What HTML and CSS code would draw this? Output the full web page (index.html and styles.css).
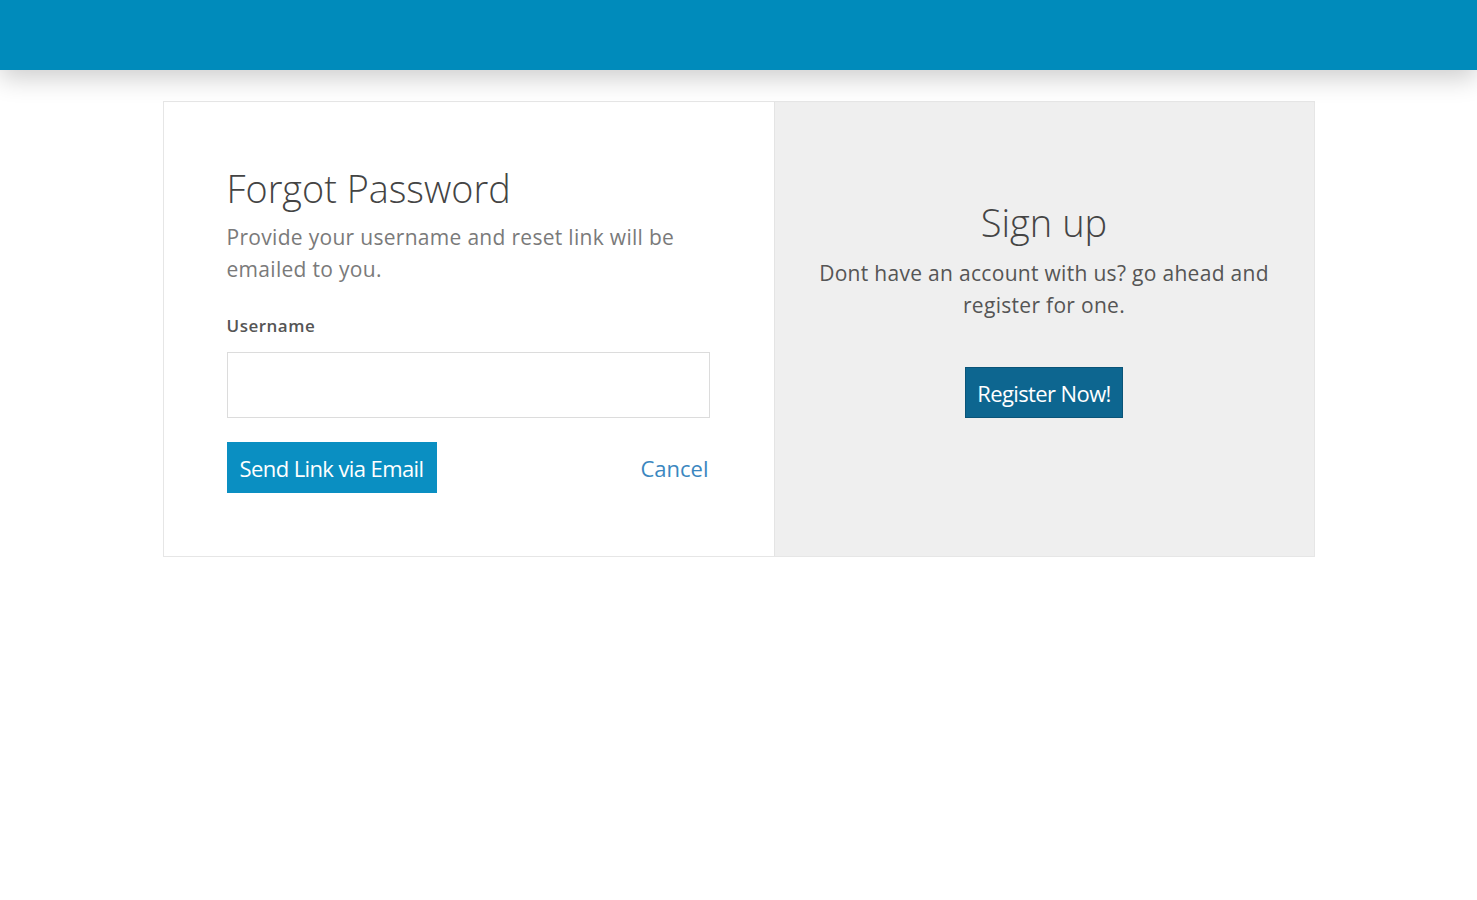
FILE: index.html
```html
<!DOCTYPE html>
<html lang="en">
<head>
<meta charset="utf-8">
<title>Forgot Password</title>
<link rel="stylesheet" href="styles.css">
</head>
<body>
<header class="topbar"></header>
<main class="page">
  <section class="card">
    <div class="panel panel-left">
      <h1 class="title">Forgot Password</h1>
      <p class="lead">Provide your username and reset link will be emailed to you.</p>
      <label class="label" for="username">Username</label>
      <input class="input" id="username" type="text">
      <div class="actions">
        <button class="btn btn-primary" type="button">Send Link via Email</button>
        <a class="link" href="#">Cancel</a>
      </div>
    </div>
    <div class="panel panel-right">
      <h2 class="title-2">Sign up</h2>
      <p class="lead-2">Dont have an account with us? go ahead and register for one.</p>
      <button class="btn btn-dark" type="button">Register Now!</button>
    </div>
  </section>
</main>
</body>
</html>
```
FILE: styles.css
```css
* { box-sizing: border-box; }
html, body { margin: 0; padding: 0; background: #fff; }
body {
  font-family: "Open Sans", "Liberation Sans", sans-serif;
  color: #555;
}
.topbar {
  height: 70px;
  background: #008bbb;
  box-shadow: 0 8px 26px rgba(0,0,0,0.2);
  position: relative;
  z-index: 1;
}
.page {
  display: flex;
  justify-content: center;
  padding-top: 31px;
}
.card {
  width: 1152px;
  height: 456px;
  display: flex;
  border: 1px solid #e6e6e6;
}
.panel-left {
  width: 610px;
  background: #fff;
  padding: 64px 63px 0 63px;
}
.panel-right {
  flex: 1;
  background: #efefef;
  border-left: 1px solid #e4e4e4;
  display: flex;
  flex-direction: column;
  align-items: center;
  padding: 96px 20px 0;
  text-align: center;
}
.title {
  margin: 0;
  font-weight: 300;
  font-size: 37.8px;
  line-height: 46px;
  color: #444;
}
.lead {
  margin: 9px 0 0;
  font-size: 21px;
  letter-spacing: 0.3px;
  line-height: 32px;
  color: #7a7a7a;
  width: 470px;
}
.label {
  display: block;
  margin-top: 30px;
  font-size: 17px;
  font-weight: 600;
  letter-spacing: 0.5px;
  color: #555;
  line-height: 22px;
}
.input {
  display: block;
  margin-top: 15px;
  width: 483px;
  height: 66px;
  border: 1px solid #dcdcdc;
  background: #fff;
  font-family: inherit;
}
.actions {
  width: 483px;
  margin-top: 24px;
  display: flex;
  justify-content: space-between;
  align-items: center;
}
.btn {
  border: none;
  color: #fff;
  font-family: "Open Sans", "Liberation Sans", sans-serif;
  font-size: 22px;
  letter-spacing: -0.6px;
  height: 51px;
  padding: 0 8px;
  cursor: pointer;
}
.btn-primary {
  background: #0a8fc2;
  width: 210px;
}
.link {
  font-size: 22px;
  color: #3b87c0;
  text-decoration: none;
  margin-right: 1px;
}
.title-2 {
  margin: 0;
  font-weight: 300;
  font-size: 38px;
  line-height: 48px;
  color: #444;
}
.lead-2 {
  margin: 11px 0 0;
  font-size: 21px;
  letter-spacing: 0.3px;
  line-height: 32px;
  color: #555;
  width: 470px;
}
.btn-dark {
  margin-top: 46px;
  background: #0d6690;
  width: 158px;
  height: 51px;
  border: 1px solid #0a5478;
}
```
